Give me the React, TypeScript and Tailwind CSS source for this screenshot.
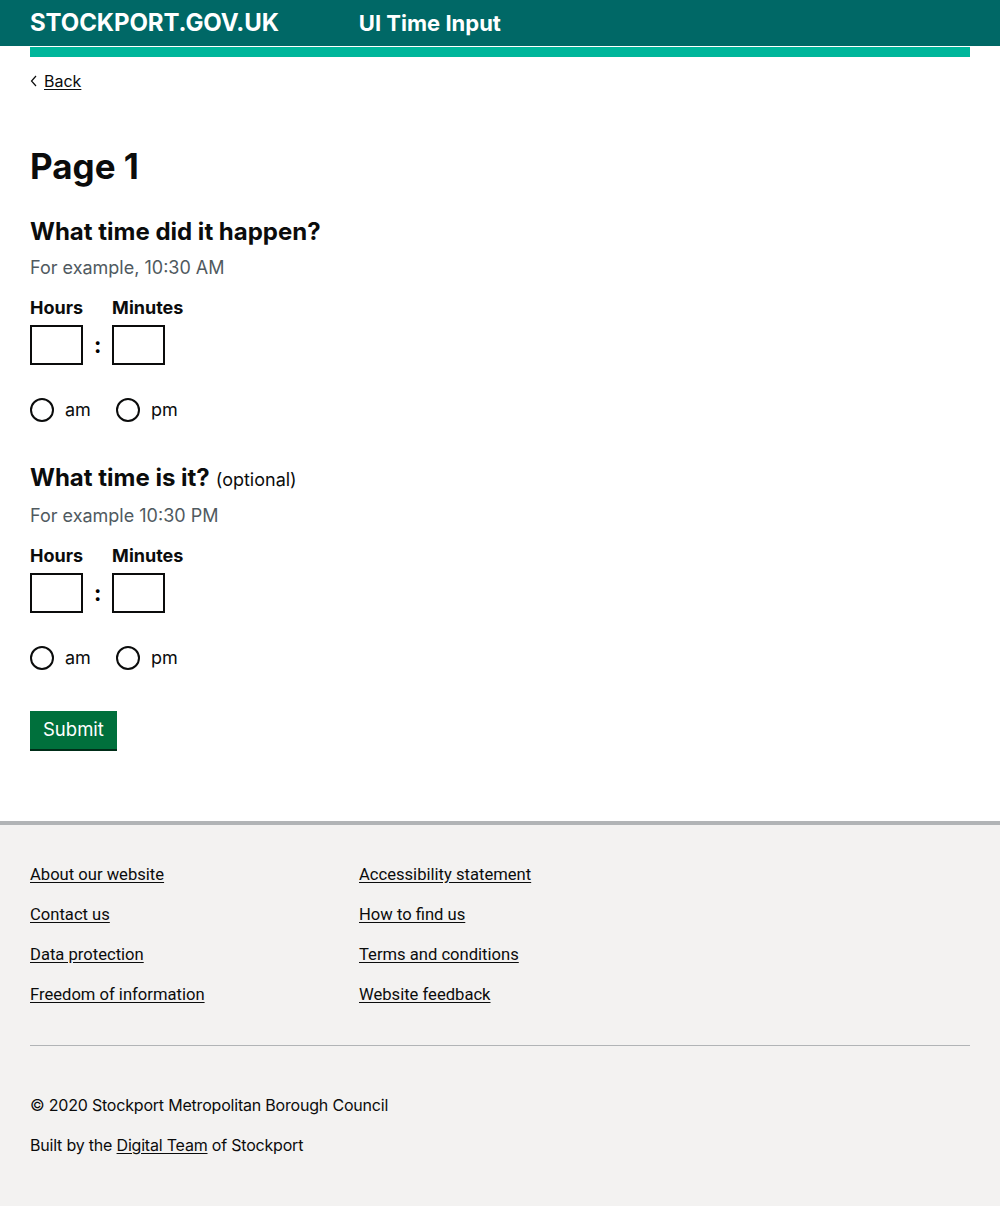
import { ReactNode } from "react";

const sans = "font-['Inter','Liberation_Sans',sans-serif]";

function Radio({ label }: { label: string }) {
  return (
    <label className="flex items-center gap-[11px] text-[18px] text-[#0b0c0c]">
      <span className="block h-[24px] w-[24px] rounded-full border-2 border-[#0b0c0c] bg-white" />
      {label}
    </label>
  );
}

function TimeField({ title, optional, hint }: { title: string; optional?: boolean; hint: string }) {
  return (
    <fieldset>
      <h2 className="flex items-baseline text-[24px] font-bold leading-[30px] text-[#0b0c0c]">
        {title}
        {optional && <span className="ml-[6px] text-[18px] font-normal">(optional)</span>}
      </h2>
      <p className="mt-[9px] text-[18px] leading-[24px] text-[#505a5f]">{hint}</p>
      <div className="mt-[18px] flex items-end">
        <div className="flex flex-col">
          <span className="text-[18px] font-bold leading-[20px] text-[#0b0c0c]">Hours</span>
          <input className="mt-[7px] h-[40px] w-[53px] border-2 border-[#0b0c0c] bg-white outline-none" />
        </div>
        <span className="mx-[8px] mb-[6px] w-[13px] text-center text-[22px] font-bold leading-[28px]">:</span>
        <div className="flex flex-col">
          <span className="text-[18px] font-bold leading-[20px] text-[#0b0c0c]">Minutes</span>
          <input className="mt-[7px] h-[40px] w-[53px] border-2 border-[#0b0c0c] bg-white outline-none" />
        </div>
      </div>
      <div className="mt-[31px] flex gap-[25px]">
        <Radio label="am" />
        <Radio label="pm" />
      </div>
    </fieldset>
  );
}

function FooterLink({ children }: { children: ReactNode }) {
  return (
    <a href="#" className="font-['Roboto',sans-serif] text-[16.6px] leading-[20px] text-[#0b0c0c] underline underline-offset-[2px]">
      {children}
    </a>
  );
}

export default function App() {
  return (
    <div className={`${sans} min-h-[1206px] bg-white flex flex-col`}>
      <header className="bg-[#006866]">
        <div className="flex h-[46px] items-center px-[30px] text-white">
          <span className="text-[24px] font-bold tracking-[-0.1px]">STOCKPORT.GOV.UK</span>
          <span className="ml-[80px] text-[22px] font-bold">UI Time Input</span>
        </div>
      </header>
      <div className="mx-[30px] mt-[1px] h-[10px] bg-[#00b69b]" />

      <main className="px-[30px]">
        <a href="#" className="mt-[14px] flex items-center gap-[6px] text-[16px] leading-[20px] text-[#0b0c0c]">
          <svg width="8" height="12" viewBox="0 0 8 12" fill="none" stroke="#0b0c0c" strokeWidth="1.2">
            <path d="M6 1 1.5 6 6 11" />
          </svg>
          <span className="underline underline-offset-[2px]">Back</span>
        </a>

        <h1 className="mt-[53px] text-[35px] font-bold leading-[44px] text-[#0b0c0c]">Page 1</h1>

        <div className="mt-[29px]">
          <TimeField title="What time did it happen?" hint="For example, 10:30 AM" />
        </div>
        <div className="mt-[40px]">
          <TimeField title="What time is it?" optional hint="For example 10:30 PM" />
        </div>

        <button className="mt-[40px] h-[40px] border-b-2 border-[#002d18] bg-[#00703c] px-[13px] text-[18.5px] text-white">
          Submit
        </button>
      </main>

      <footer className="mt-[70px] flex-1 border-t-4 border-[#b1b4b6] bg-[#f3f2f1] px-[30px]">
        <div className="mt-[40px] grid grid-cols-[329px_1fr] gap-y-[20px]">
          <FooterLink>About our website</FooterLink>
          <FooterLink>Accessibility statement</FooterLink>
          <FooterLink>Contact us</FooterLink>
          <FooterLink>How to find us</FooterLink>
          <FooterLink>Data protection</FooterLink>
          <FooterLink>Terms and conditions</FooterLink>
          <FooterLink>Freedom of information</FooterLink>
          <FooterLink>Website feedback</FooterLink>
        </div>
        <hr className="mt-[40px] border-t border-[#b1b4b6]" />
        <p className="mt-[49px] text-[16px] leading-[20px] tracking-[-0.2px] text-[#0b0c0c]">© 2020 Stockport Metropolitan Borough Council</p>
        <p className="mt-[20px] text-[16px] leading-[20px] tracking-[-0.2px] text-[#0b0c0c]">
          Built by the <a href="#" className="underline underline-offset-[2px]">Digital Team</a> of Stockport
        </p>
      </footer>
    </div>
  );
}
